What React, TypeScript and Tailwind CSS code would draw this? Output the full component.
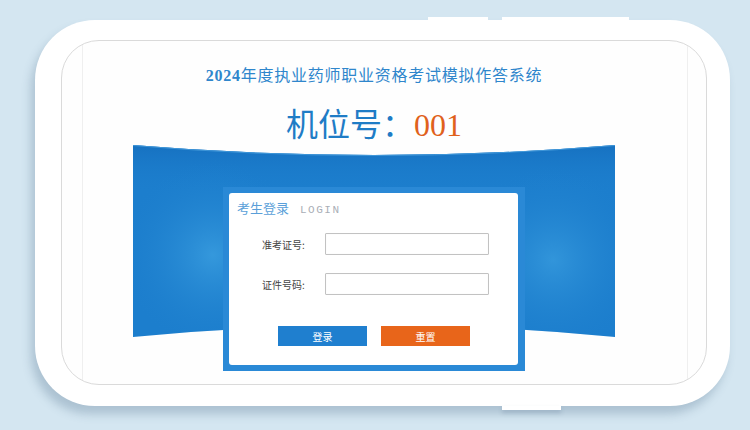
import React from "react";

const cjk = "font-['Noto_Sans_CJK_SC',sans-serif]";

function Banner() {
  return (
    <svg className="absolute inset-0" width="482" height="226" viewBox="0 0 482 226">
      <defs>
        <radialGradient id="gl" cx="80" cy="110" r="95" gradientUnits="userSpaceOnUse">
          <stop offset="0" stopColor="#3b9fe0" stopOpacity="0.8" />
          <stop offset="1" stopColor="#1c7ecd" stopOpacity="0" />
        </radialGradient>
        <radialGradient id="gr" cx="420" cy="115" r="95" gradientUnits="userSpaceOnUse">
          <stop offset="0" stopColor="#3b9fe0" stopOpacity="0.7" />
          <stop offset="1" stopColor="#1c7ecd" stopOpacity="0" />
        </radialGradient>
        <linearGradient id="gt" x1="0" y1="0" x2="0" y2="1">
          <stop offset="0" stopColor="#1670c0" stopOpacity="0.9" />
          <stop offset="0.25" stopColor="#1c7ecd" stopOpacity="0" />
        </linearGradient>
      </defs>
      <path d="M0 0 Q241 20 482 0 L482 192 Q241 168 0 192 Z" fill="#1c7ecd" />
      <path d="M0 0 Q241 20 482 0 L482 192 Q241 168 0 192 Z" fill="url(#gt)" />
      <path d="M0 0 Q241 20 482 0 L482 192 Q241 168 0 192 Z" fill="url(#gl)" />
      <path d="M0 0 Q241 20 482 0 L482 192 Q241 168 0 192 Z" fill="url(#gr)" />
      <path d="M0 0.5 Q241 20.5 482 0.5" fill="none" stroke="#5aaee6" strokeWidth="1" opacity="0.6" />
    </svg>
  );
}

export default function App() {
  return (
    <div className="w-[750px] h-[430px] bg-[#d4e6f1] pt-[20px] pl-[35px] overflow-hidden">
      <div className="relative w-[695px] h-[386px] bg-white rounded-[60px] shadow-[-4px_8px_10px_rgba(70,100,130,0.28)] pt-[20px] pl-[26px]">
        <div className="absolute top-[-3px] left-[393px] w-[60px] h-[3px] bg-white" />
        <div className="absolute top-[-3px] left-[467px] w-[127px] h-[3px] bg-white" />
        <div className="absolute bottom-[-4px] left-[467px] w-[59px] h-[4px] bg-white shadow-[0_3px_4px_rgba(70,100,130,0.25)]" />
        <div className="w-[646px] h-[345px] rounded-[38px] border border-[#dadada] bg-[#fefefe] overflow-hidden pl-[20px]">
          <div className="w-[606px] h-full border-x border-[#efefef]">
            <div className="ml-[50px] w-[482px] flex flex-col items-center pt-[23px]">
              <div className={`h-[20px] text-[16px] leading-[20px] tracking-[0.75px] text-[#2f86cc] ${cjk}`}>
                <span className="font-['Liberation_Serif',serif] font-bold">2024</span>年度执业药师职业资格考试模拟作答系统
              </div>
              <div className={`mt-[20px] h-[36px] text-[32px] leading-[36px] text-[#1f7cc6] ${cjk}`}>
                机位号：<span className="font-['Liberation_Serif',serif] text-[#e0611c]">001</span>
              </div>
              <div className="relative mt-[5px] w-[482px] h-[226px]">
                <Banner />
                <div className="relative ml-[90px] mt-[42px] w-[302px] h-[184px] bg-[#2a89d6] pt-[6px] pl-[6px]">
                  <div className="w-[289px] h-[172px] bg-white rounded-[3px]">
                    <div className="flex items-baseline pt-[6px] pl-[8px] h-[24px]">
                      <span className={`text-[13px] leading-[18px] text-[#5a9fd9] ${cjk}`}>考生登录</span>
                      <span className="ml-[11px] text-[11px] leading-[18px] tracking-[1.5px] text-[#a9aeb6] font-['Liberation_Mono',monospace]">LOGIN</span>
                    </div>
                    <div className="mt-[16px] flex items-center pl-[33px]">
                      <span className={`w-[63px] text-[10px] text-[#444] ${cjk}`}>准考证号:</span>
                      <div className="w-[164px] h-[22px] border border-[#c2c2c2] rounded-[1px] shadow-[inset_0_0_1px_rgba(0,0,0,0.1)]" />
                    </div>
                    <div className="mt-[18px] flex items-center pl-[33px]">
                      <span className={`w-[63px] text-[10px] text-[#444] ${cjk}`}>证件号码:</span>
                      <div className="w-[164px] h-[22px] border border-[#c2c2c2] rounded-[1px] shadow-[inset_0_0_1px_rgba(0,0,0,0.1)]" />
                    </div>
                    <div className="mt-[31px] flex pl-[49px] gap-[14px]">
                      <div className={`w-[89px] h-[20px] bg-[#1f7fcf] text-white text-[10px] flex items-center justify-center ${cjk}`}>登录</div>
                      <div className={`w-[89px] h-[20px] bg-[#e8651a] text-white text-[10px] flex items-center justify-center ${cjk}`}>重置</div>
                    </div>
                  </div>
                </div>
              </div>
            </div>
          </div>
        </div>
      </div>
    </div>
  );
}
